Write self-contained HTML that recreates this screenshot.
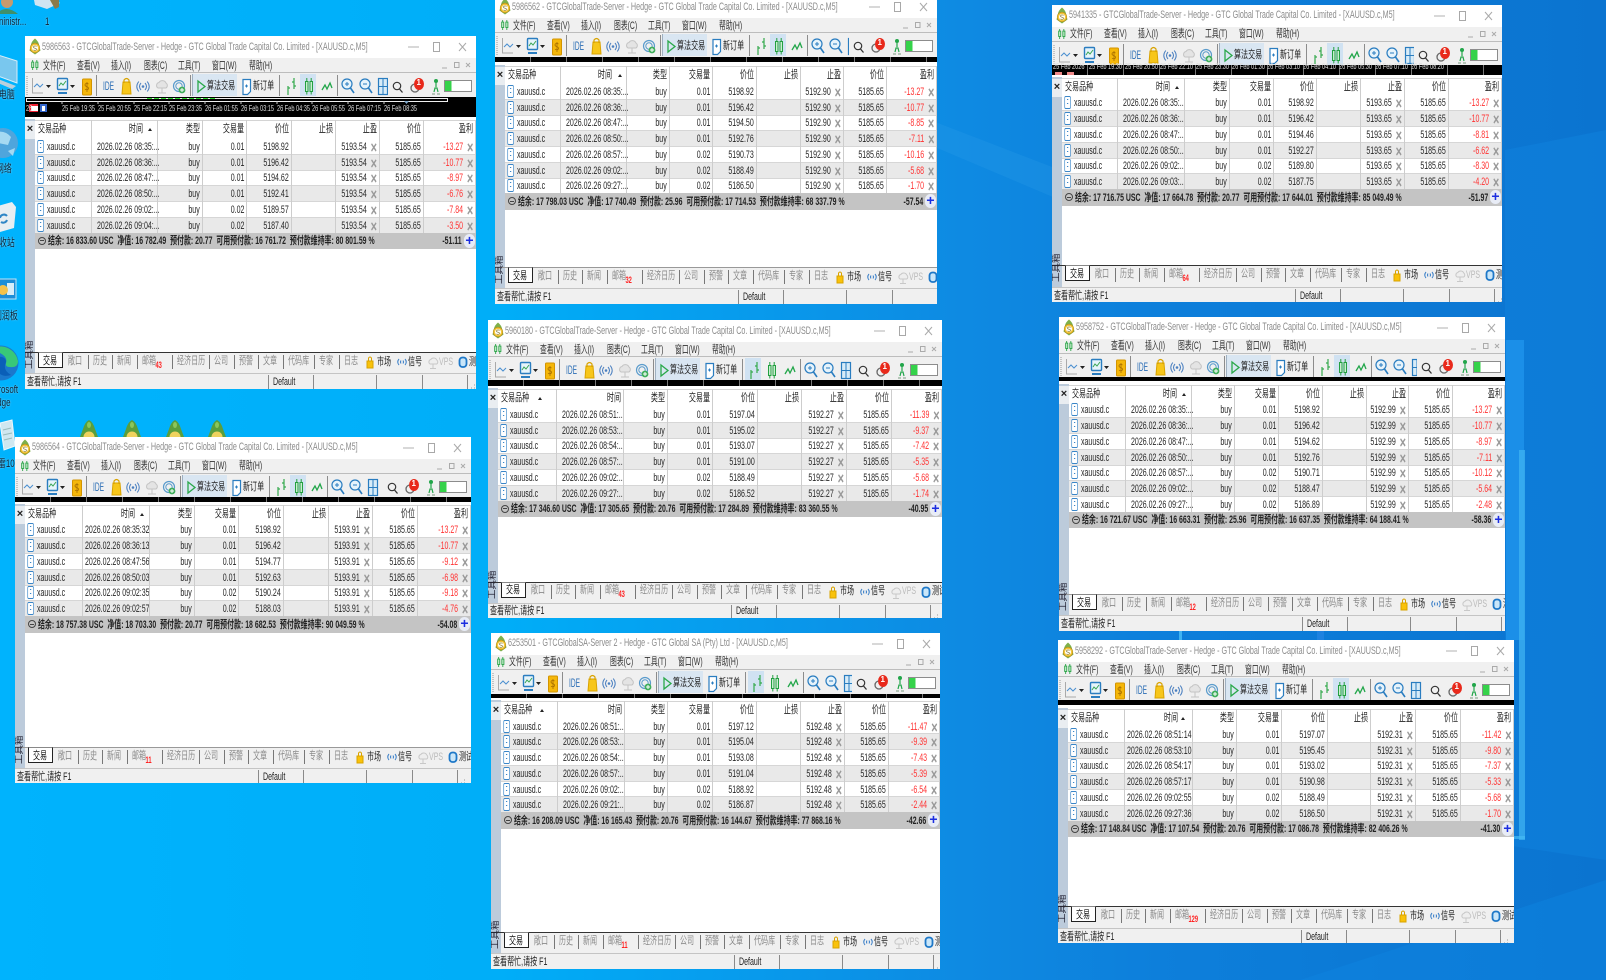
<!DOCTYPE html>
<html lang="zh"><head><meta charset="utf-8"><title>GTC</title>
<style>
html,body{margin:0;width:1606px;height:980px;overflow:hidden}
body{position:relative;font:11px/1.2 "Liberation Sans","Noto Sans CJK SC",sans-serif;background:#0a80dc}
.bg{position:absolute;left:0;top:0}
.lb{position:absolute;white-space:nowrap;color:#0e2236;font-size:11px;text-shadow:0 0 2px rgba(255,255,255,.55);transform:scaleX(.72);transform-origin:0 50%;filter:blur(.3px)}
.w{position:absolute;background:#fff;overflow:hidden;filter:blur(.32px)}
.w i,.w b{font-style:normal;font-weight:normal}
.w i{position:absolute;white-space:nowrap;transform:scaleX(.64);transform-origin:0 50%}
.ti{position:absolute;left:17px;top:4.500px;color:#8c8c8c;font-size:11px;white-space:nowrap;transform:scaleX(.654);transform-origin:0 50%}
.ic{position:absolute;left:4px;top:2px}
.cap{position:absolute;right:0;top:0}
.mb{position:absolute;left:0;right:0;top:22px;height:15px;background:#f0f0f0;border-bottom:1px solid #bdbdbd;box-sizing:border-box;color:#333}
.mb i{top:1.500px;transform:scaleX(.62)}
.mb i:nth-child(1){left:18px}.mb i:nth-child(2){left:52px}.mb i:nth-child(3){left:86px}.mb i:nth-child(4){left:119px}.mb i:nth-child(5){left:153px}.mb i:nth-child(6){left:187px}.mb i:nth-child(7){left:224px}
.mi{position:absolute;left:5px;top:1px}.mr{position:absolute;right:0;top:1px}
.tb{position:absolute;left:0;right:0;top:37px;height:24px;background:#f0f0f0;color:#222}
.tb svg{position:absolute;top:0;left:0}
.tb .tr{left:auto;right:0;background:#f0f0f0}
.btn{position:absolute;left:167px;top:1px;width:45px;height:22px;background:#d9e6f2;border-left:1px solid #9fb0c0;box-sizing:border-box}
.sel{position:absolute;top:1px;width:16px;height:22px;background:#d0e2f2}
.tb i.ide{left:78px;top:6px;color:#2a6db5;font-size:12px;transform:scaleX(.55)}
.tb i.a1{left:182px;top:7px}
.tb i.a2{left:228px;top:7px}
.tb i.n1{left:auto;right:55px;top:5px;color:#fff;font-size:8px;font-weight:bold;transform:none}
.bk{position:absolute;left:0;right:0;background:#000;top:var(--k);height:var(--kh);color:#ddd;font-size:8px}
.bk i{transform:scaleX(.7)}
.bk svg{position:absolute;left:0;top:0}
.ck{background:repeating-linear-gradient(90deg,#000 0 35.600px,#eee 35.600px 36px)}
.gu{position:absolute;left:0;width:10px;background:#bccbdb;top:calc(var(--h) - 1px);height:calc(var(--tt) - var(--h) + 1px)}
.xx{position:absolute;left:0;width:10px;top:calc(var(--h) + 1px);height:18px;background:#e9edf1;color:#222;font-weight:bold;font-size:11px;text-align:center;line-height:17px}
.g{display:grid;grid-template-columns:var(--g);align-items:center;box-sizing:border-box}
.hd{position:absolute;left:10px;right:0;top:var(--h);height:calc(var(--rt) - var(--h));background:#fff;border-top:1px solid #d4d4d4;color:#222}
.g>b{justify-self:end;margin-right:3px;white-space:nowrap;position:relative;transform:scaleX(.64);transform-origin:100% 50%}
.g>b:nth-child(1){justify-self:start;margin-left:3px;margin-right:0;transform-origin:0 50%}
.hd>b:nth-child(2){margin-right:15px}
.hd.s1>b:nth-child(2){margin-right:3px}
.ar{position:absolute;top:7px;width:0;height:0;border:2.500px solid transparent;border-bottom:3px solid #222;border-top:0}
.rows{position:absolute;left:10px;right:0;top:var(--rt)}
.r{height:15.750px;border-bottom:1px solid #d6d6d6;color:#262626;background:#fff}
.r:nth-child(even){background:#e9e9e9}
.r>b{top:1.200px}
.r>b:nth-child(1){margin-left:12px}
.r>b:nth-child(1)::before{content:"";position:absolute;left:-15.500px;top:-1px;width:8px;height:11px;border:1px solid #3a86c8;border-width:1px 1.500px;border-radius:2px;background:linear-gradient(#3a86c8,#3a86c8) 3px 2px/2px 1px no-repeat,linear-gradient(#3a86c8,#3a86c8) 3px 6px/2px 1px no-repeat,#fff}
.r>b:nth-child(2){justify-self:start;margin-left:4.500px;margin-right:0;transform-origin:0 50%}
.fu .r>b:nth-child(2){margin-left:2px}
.r>b:nth-child(7),.r>b:nth-child(9){margin-right:13px}
.r>b:nth-child(9){color:#f33}
.r>b:nth-child(7)::after,.r>b:nth-child(9)::after{content:"×";position:absolute;left:100%;margin-left:6px;top:0;font-size:17px;line-height:13px;font-weight:bold;color:#999}
.sum{position:relative;height:16.500px;margin-top:-1px;background:#c4c4c4;font-weight:bold;color:#222}
.sum b{position:absolute;top:2.500px;font-weight:bold;white-space:nowrap;transform:scaleX(.63);transform-origin:0 50%}
.sum b.m{left:13px}
.sum b.e{right:14px;transform-origin:100% 50%}
.sum u{position:absolute;left:3px;top:4px;width:6px;height:6px;border:1px solid #444;border-radius:50%;background:linear-gradient(#444,#444) center/4px 1px no-repeat}
.sum s{position:absolute;right:1px;top:1px;width:11px;height:14px;background:#e8ecf6;border-radius:6px;text-decoration:none;color:#1c2ee0;font:bold 14px/13px "Liberation Sans",sans-serif;text-align:center}
.cl{position:absolute;left:10px;right:0;top:var(--h);height:calc(var(--rt) - var(--h) + var(--n)*15.750px - 1px)}
.cl div{height:100%;border-right:1px solid #cdcdcd;box-sizing:border-box}
.tabs{position:absolute;left:0;right:0;top:var(--tt);height:calc(var(--st) - var(--tt));background:linear-gradient(90deg,#bccbdb 10px,#f0f0f0 10px);border-top:1px solid var(--tc,#333);box-sizing:border-box;color:#8a8a8a}
.tabs svg{position:absolute;left:0;top:0}
.tabs i{top:1.500px}
.act{position:absolute;left:13px;top:-1px;width:25px;height:16px;background:#fff;border:1px solid #222;border-top:1px solid #888;box-sizing:border-box}
.tabs i:nth-of-type(1){left:18px;color:#111}.tabs i:nth-of-type(2){left:43px}.tabs i:nth-of-type(3){left:68px}.tabs i:nth-of-type(4){left:92px}.tabs i:nth-of-type(5){left:117px}.tabs i:nth-of-type(6){left:152px}.tabs i:nth-of-type(7){left:189px}.tabs i:nth-of-type(8){left:214px}.tabs i:nth-of-type(9){left:238px}.tabs i:nth-of-type(10){left:263px}.tabs i:nth-of-type(11){left:294px}.tabs i:nth-of-type(12){left:319px}.tabs i:nth-of-type(13){left:352px;color:#222;top:2.500px}.tabs i:nth-of-type(14){left:383px;color:#222;top:2.500px}.tabs i:nth-of-type(15){left:414px;color:#bbb;top:2.500px}.tabs i:nth-of-type(16){left:444px;color:#222;top:2.500px}
.tabs em{position:absolute;left:21px;top:5px;font-style:normal;color:#f22;font-size:9px;font-weight:bold}
.vt{position:absolute;left:-1px;top:-13px;width:11px;height:29px;font-size:9.500px;line-height:11px;color:#223;writing-mode:vertical-rl;text-orientation:sideways;transform:rotate(180deg);white-space:nowrap;overflow:hidden}
.st{position:absolute;left:0;right:0;top:var(--st);bottom:0;background:#f0f0f0;border-top:1px solid #c4c4c4;box-sizing:border-box;color:#222}
.st i{top:1.500px}.st i:nth-of-type(1){left:2px}.st i:nth-of-type(2){left:248px}
.st svg{position:absolute;left:0;top:0}
</style></head><body>

<svg class="bg" width="1606" height="980" viewBox="0 0 1606 980">
<defs>
<linearGradient id="bgl" x1="0" x2="1" y1="0" y2="0"><stop offset="0" stop-color="#00b3fd"/><stop offset=".31" stop-color="#00aef8"/><stop offset=".6" stop-color="#0e8ae2"/><stop offset=".72" stop-color="#0d7fdb"/><stop offset="1" stop-color="#0b74d0"/></linearGradient>
<symbol id="tb" viewBox="0 0 364 24">
<path d="M2 3v19" stroke="#999" stroke-dasharray="1 1" fill="none"/>
<path d="M7.500 5v15H18" stroke="#aaa" fill="none"/><path d="M9 14l3-3 3 3 3-3" stroke="#4a8fd0" fill="none"/>
<path d="M21 12h5l-2.500 3zM45 12h5l-2.500 3z" fill="#222"/>
<rect x="32.500" y="5.500" width="10" height="11" rx="1" fill="#e6f4fb" stroke="#2a7dc0" stroke-width="1.400"/><path d="M34 13l2-3 2 2 3-4" stroke="#3aa655" fill="none"/><path d="M33 19h9v2h-9z" fill="#2a7dc0"/>
<rect x="57.500" y="6" width="9" height="16" rx="1" fill="#f5b70a" stroke="#d39400"/><path d="M63.500 11c-1.500-1-3.500-.7-3.500 1 0 2 3.500 1.200 3.500 3.200 0 1.600-2 2-3.500 1M62 9v10" stroke="#a86f00" fill="none" stroke-width=".8"/>
<path d="M71.500 2v21M165.500 2v21M254.500 2v21M312.500 2v21" stroke="#8c8c8c"/>
<path d="M97 21l1-12h7l1 12z" fill="#f7c61a" stroke="#d9a300"/><path d="M99 10V7q2.500-3 5 0v3" fill="none" stroke="#d9a300" stroke-width="1.200"/>
<path d="M116 10q-3 3.500 0 7M120 10q3 3.500 0 7M113.800 8.500q-4 5 0 10M122.200 8.500q4 5 0 10" stroke="#4a7fc0" fill="none"/><circle cx="118" cy="13.500" r="1.300" fill="#4a7fc0"/>
<path d="M133 15a3 3 0 0 1 1-5.500 4 4 0 0 1 7 .5 3 3 0 0 1 0 5zM137 15v5M133 20h8" fill="#e4e4e4" stroke="#c4c4c4"/>
<circle cx="154" cy="13" r="5.500" fill="none" stroke="#5a9bcc" stroke-width="1.200"/><circle cx="154" cy="13" r="3.200" fill="none" stroke="#5a9bcc"/><circle cx="157" cy="17" r="3.400" fill="#3fae5a"/><path d="M157 15v4M155 17h4" stroke="#fff"/>
<path d="M173 8l7 5.500-7 5.500z" fill="none" stroke="#2aa84a" stroke-width="1.300"/>
<path d="M218 6.500h7.500v12l-3 3h-4.500z" fill="#fff" stroke="#2a7dc0" stroke-width="1.200"/><path d="M220 13h3M221.500 11.500v3" stroke="#2a7dc0"/>
<path d="M263 13v9M263 15h2M269 5v11M267 9h2M269 13h2" stroke="#35a94d" stroke-width="1.200" fill="none"/>
<rect x="280.500" y="8.500" width="2.500" height="10" fill="#c9eed0" stroke="#22a040"/><rect x="285" y="8.500" width="2.500" height="10" fill="#c9eed0" stroke="#22a040"/><path d="M281.800 5v3.500M281.800 18.500v3M286.200 5v3.500M286.200 18.500v3" stroke="#22a040"/>
<path d="M297 17l3-5 2 4 3-6 2 5" fill="none" stroke="#22a64a" stroke-width="1.300"/>
<circle cx="322" cy="11" r="5" fill="#e6f3fb" stroke="#2a7dc0" stroke-width="1.200"/><path d="M320 11h4M322 9v4" stroke="#2a7dc0"/><path d="M325.500 15l3.500 5" stroke="#2a7dc0" stroke-width="1.600"/>
<circle cx="340" cy="11" r="5" fill="#e6f3fb" stroke="#2a7dc0" stroke-width="1.200"/><path d="M338 11h4" stroke="#2a7dc0"/><path d="M343.500 15l3.500 5" stroke="#2a7dc0" stroke-width="1.600"/>
<rect x="353.500" y="5.500" width="9" height="16" fill="#d8ecf8" stroke="#2a7dc0" stroke-width="1.200"/><path d="M358 5.500v16M353.500 13.500h9" stroke="#2a7dc0"/>
</symbol>
<symbol id="tr" viewBox="0 0 88 24">
<circle cx="9" cy="13" r="3.700" fill="none" stroke="#333" stroke-width="1.200"/><path d="M11.500 16l3 3.500" stroke="#333" stroke-width="1.300"/>
<circle cx="27" cy="15" r="4" fill="none" stroke="#666" stroke-width="1.300"/><ellipse cx="31" cy="11" rx="5" ry="6" fill="#e8291b"/>
<circle cx="48" cy="8" r="2" fill="#22a64a"/><path d="M48 10v4M46 19l1-4h2l1 4" stroke="#22a64a" fill="none" stroke-width="1.200"/><path d="M44 21h3M49 21h3" stroke="#7a9a80"/>
<rect x="56.500" y="7.500" width="27" height="11" fill="#fff" stroke="#8c8c8c"/><rect x="57" y="8" width="6.500" height="10" fill="#35d24a"/>
</symbol>
<symbol id="ts" viewBox="0 0 456 18">
<path d="M63.500 2v14M87.500 2v14M112.500 2v14M147.500 2v14M184.500 2v14M209.500 2v14M233.500 2v14M258.500 2v14M289.500 2v14M314.500 2v14" stroke="#777"/>
<path d="M342 15V8h6v7z" fill="#f9c20a" stroke="#d9a300"/><path d="M343.500 8V5q1.500-2 3 0v3" fill="none" stroke="#d9a300"/>
<path d="M374 6q-2.500 3 0 6M380 6q2.500 3 0 6M376 7.500q-1 1.500 0 3M378 7.500q1 1.500 0 3" stroke="#3a7fc8" fill="none"/>
<path d="M405 11a2.500 2.500 0 0 1 .8-4.500 3.500 3.500 0 0 1 6 .5 2.500 2.500 0 0 1 0 4zM408 11v4M405 15.500h6" fill="#eee" stroke="#c8c8c8"/>
<rect x="434.500" y="4.500" width="7" height="9.500" rx="3" fill="#c9e6f9" stroke="#1e78c8" stroke-width="1.800"/>
</symbol>
<symbol id="ss" viewBox="0 0 456 18">
<path d="M243.500 1v15M288.500 1v15M351.500 1v15M397.500 1v15M442.500 1v15" stroke="#8a8a8a"/>
<path d="M449 14h1M446 14h1M449 11h1" stroke="#999"/>
</symbol>
<symbol id="mi" viewBox="0 0 12 12"><rect x="2" y="2.500" width="2.500" height="6.500" fill="#c9eed0" stroke="#22a040"/><rect x="7" y="2.500" width="2.500" height="6.500" fill="#c9eed0" stroke="#22a040"/><path d="M3.200 0v2.500M3.200 9v3M8.200 0v2.500M8.200 9v3" stroke="#22a040"/></symbol>
<symbol id="ic" viewBox="0 0 12 17"><path d="M6 0.500q3.500 3 4 6l1.500 6-5.500 4-5.500-4 1.500-6q.5-3 4-6z" fill="#7eb04a"/><circle cx="6" cy="10" r="4.800" fill="#f4c637" stroke="#b08a18" stroke-width=".6"/><circle cx="6" cy="10" r="3" fill="#fff"/><path d="M7.500 8.500c-1-1-3-.5-3 .7s3 .8 3 2c0 1.200-2 1.500-3 .7" fill="none" stroke="#8a7a2a" stroke-width=".7"/></symbol>
<symbol id="cp" viewBox="0 0 80 22"><path d="M12 11h11" stroke="#b0b0b0"/><rect x="37.500" y="6.500" width="6" height="9" fill="none" stroke="#a8a8a8"/><path d="M63 7l7 8M70 7l-7 8" stroke="#aaa"/></symbol>
<symbol id="mr" viewBox="0 0 40 12"><path d="M6 9h5" stroke="#aaa"/><rect x="18.500" y="3.500" width="4.500" height="5" fill="none" stroke="#aaa"/><path d="M30 4l4 4M34 4l-4 4" stroke="#aaa"/></symbol>
</defs>
<rect width="1606" height="980" fill="url(#bgl)"/>
<polygon points="930,120 1060,170 1060,200 930,145" fill="#2a9ae8" opacity=".3"/>
<polygon points="1300,980 1606,880 1606,980" fill="#0d84e0" opacity=".5"/>
<polygon points="1505,150 1606,130 1606,860 1505,845" fill="#1182dd" opacity=".55"/>
<rect x="1506" y="340" width="18" height="300" fill="#1b8fe8"/>
<rect x="1519" y="450" width="6" height="390" fill="#3fb3f2" opacity=".75"/>
<rect x="1506" y="836" width="19" height="3" fill="#45baf5" opacity=".7"/>
<rect x="1179" y="631" width="3" height="10" fill="#3fb3f2"/><rect x="1317" y="631" width="7" height="10" fill="#1e82e0"/>
<!-- desktop icons -->
<circle cx="7" cy="2" r="6" fill="#c79a6e"/><path d="M-4 14q10-10 22 0z" fill="#3f8f6a"/>
<path d="M34 0h22l4 3-13 6-12-4z" fill="#cfe4f2"/><path d="M50 0h9v7l-4 2z" fill="#8b7a4a"/>
<path d="M-2 55l19 6v22l-19-7z" fill="#79c7ee" stroke="#d8eef9"/><path d="M-2 79l18 7-4 3-14-6z" fill="#b9cfdc"/>
<circle cx="3" cy="143" r="15" fill="#4fa5dc"/><path d="M-6 133q10-4 17 4l-3 8-10-2zM8 151l7-3-2 8z" fill="#a5d9f2"/>
<path d="M-2 206l14-4 4 5-2 21-14 4z" fill="#e8eef2"/><path d="M0 218a4 4 0 0 1 7-2M7 220a4 4 0 0 1-6 2" stroke="#2f86c6" stroke-width="2" fill="none"/>
<rect x="-2" y="279" width="18" height="20" fill="#1c8ed8" stroke="#bfe3f5"/><rect x="7" y="283" width="7" height="12" fill="#d7edf8"/><circle cx="3" cy="290" r="5" fill="#f5c24a"/>
<circle cx="1" cy="363" r="17.500" fill="#1b78cc"/><path d="M-16 359a17.500 17.500 0 0 1 34 2q0 7-8 6-5 0-4-4 2-6-6-10-8-3-16 6z" fill="#38c878"/><path d="M-5 360q1-4 7-3 6 2 3 8-1 6 6 10-9 3-14-4-3-5-2-11z" fill="#0a5fb8"/>
<path d="M0 423l12 -3 3 26-11 4z" fill="#cfe7f0" stroke="#eef7fb"/><path d="M3 430l8-2M3 435l9-2M4 440l8-2" stroke="#9bb"/>
<g id="t1"><path d="M89 420q4 2 6 9l3 8H80l3-8q2-7 6-9z" fill="#5a9e3c"/><ellipse cx="89" cy="425" rx="2" ry="3" fill="#8cc65a"/><circle cx="89" cy="437" r="5.500" fill="#efd25e"/></g>
<use href="#t1" x="43"/><use href="#t1" x="86"/><use href="#t1" x="128"/>
</svg>
<div class="lb" style="left:-1px;top:16px">ninistr...</div>
<div class="lb" style="left:45px;top:16px">1</div>
<div class="lb" style="left:-9px;top:88.500px">此电脑</div>
<div class="lb" style="left:-4px;top:162.500px">网络</div>
<div class="lb" style="left:-9px;top:236.500px">回收站</div>
<div class="lb" style="left:-6px;top:309.500px">利润板</div>
<div class="lb" style="left:-14px;top:383.500px">Microsoft</div>
<div class="lb" style="left:-8px;top:396.500px">Edge</div>
<div class="lb" style="left:-10px;top:457.500px">迅雷10.</div>

<!-- W1 -->
<div class="w" style="left:25px;top:36px;width:451px;height:353px;--g:57px 66px 45px 44px 45px 44px 44px 44px 52px;--k:61px;--kh:20px;--h:84px;--rt:103px;--n:6;--tt:316px;--st:337px">
<svg class="ic" width="12" height="17"><use href="#ic"/></svg><div class="ti">5986563 - GTCGlobalTrade-Server - Hedge - GTC Global Trade Capital Co. Limited - [XAUUSD.c,M5]</div><svg class="cap" width="80" height="22"><use href="#cp"/></svg>
<div class="mb"><i>文件(F)</i><i>查看(V)</i><i>插入(I)</i><i>图表(C)</i><i>工具(T)</i><i>窗口(W)</i><i>帮助(H)</i><svg class="mi" width="10" height="12"><use href="#mi"/></svg><svg class="mr" width="40" height="12"><use href="#mr"/></svg></div>
<div class="tb"><div class="btn"></div><div class="sel" style="left:275px"></div><svg width="364" height="24"><use href="#tb"/></svg><svg class="tr" width="88" height="24"><use href="#tr"/></svg><i class="ide">IDE</i><i class="a1">算法交易</i><i class="a2">新订单</i><i class="n1">1</i></div>
<div class="bk"><svg width="451" height="20"><rect x="1.500" y="1.500" width="421" height="3" fill="none" stroke="#eee"/><path d="M122 1.500h70" stroke="#2ed52e" stroke-dasharray="5 2"/><path d="M37 4v3M73 4v3M109 4v3M144 4v3M180 4v3M216 4v3M252 4v3M287 4v3M323 4v3M359 4v3" stroke="#ccc"/><path d="M379 4h5l-2.500 3z" fill="#7ea6c8"/><rect x="4" y="7" width="9" height="8" fill="#e23"/><rect x="6" y="9" width="7" height="5" fill="#fff"/><rect x="15" y="7" width="7" height="8" fill="#36c"/><rect x="17" y="9" width="3" height="5" fill="#fff"/></svg><i style="left:1px;top:7px">26</i><i style="left:37px;top:7px">25 Feb 19:35</i><i style="left:73px;top:7px">25 Feb 20:55</i><i style="left:109px;top:7px">25 Feb 22:15</i><i style="left:144px;top:7px">25 Feb 23:35</i><i style="left:180px;top:7px">26 Feb 01:55</i><i style="left:216px;top:7px">26 Feb 03:15</i><i style="left:252px;top:7px">26 Feb 04:35</i><i style="left:287px;top:7px">26 Feb 05:55</i><i style="left:323px;top:7px">26 Feb 07:15</i><i style="left:359px;top:7px">26 Feb 08:35</i></div>
<div class="gu"></div><div class="xx">×</div>
<div class="hd g"><b>交易品种</b><b>时间</b><b>类型</b><b>交易量</b><b>价位</b><b>止损</b><b>止盈</b><b>价位</b><b>盈利</b><u class="ar" style="left:113px"></u></div>
<div class="rows">
<div class="r g"><b>xauusd.c</b><b>2026.02.26 08:35:...</b><b>buy</b><b>0.01</b><b>5198.92</b><b></b><b>5193.54</b><b>5185.65</b><b>-13.27</b></div>
<div class="r g"><b>xauusd.c</b><b>2026.02.26 08:36:...</b><b>buy</b><b>0.01</b><b>5196.42</b><b></b><b>5193.54</b><b>5185.65</b><b>-10.77</b></div>
<div class="r g"><b>xauusd.c</b><b>2026.02.26 08:47:...</b><b>buy</b><b>0.01</b><b>5194.62</b><b></b><b>5193.54</b><b>5185.65</b><b>-8.97</b></div>
<div class="r g"><b>xauusd.c</b><b>2026.02.26 08:50:...</b><b>buy</b><b>0.01</b><b>5192.41</b><b></b><b>5193.54</b><b>5185.65</b><b>-6.76</b></div>
<div class="r g"><b>xauusd.c</b><b>2026.02.26 09:02:...</b><b>buy</b><b>0.02</b><b>5189.57</b><b></b><b>5193.54</b><b>5185.65</b><b>-7.84</b></div>
<div class="r g"><b>xauusd.c</b><b>2026.02.26 09:04:...</b><b>buy</b><b>0.02</b><b>5187.40</b><b></b><b>5193.54</b><b>5185.65</b><b>-3.50</b></div>
<div class="sum"><u></u><b class="m">结余: 16 833.60 USC&nbsp; 净值: 16 782.49&nbsp; 预付款: 20.77&nbsp; 可用预付款: 16 761.72&nbsp; 预付款维持率: 80 801.59 %</b><b class="e">-51.11</b><s>+</s></div></div>
<div class="cl g"><div></div><div></div><div></div><div></div><div></div><div></div><div></div><div></div><div></div></div>
<div class="tabs"><div class="act"></div><svg width="456" height="18"><use href="#ts"/></svg><div class="vt">工具箱</div><i>交易</i><i>敞口</i><i>历史</i><i>新闻</i><i>邮箱<em>43</em></i><i>经济日历</i><i>公司</i><i>预警</i><i>文章</i><i>代码库</i><i>专家</i><i>日志</i><i>市场</i><i>信号</i><i>VPS</i><i>测试器</i></div>
<div class="st"><svg width="456" height="18"><use href="#ss"/></svg><i>查看帮忙,请按 F1</i><i>Default</i></div>
</div>

<!-- W2 -->
<div class="w" style="left:495px;top:-4px;width:442px;height:307.500px;--tc:#999;--g:56px 66px 43px 43px 44px 44px 43px 43px 50px;--k:61px;--kh:5px;--h:70px;--rt:88px;--n:7;--tt:271px;--st:292px">
<svg class="ic" width="12" height="17"><use href="#ic"/></svg><div class="ti">5986562 - GTCGlobalTrade-Server - Hedge - GTC Global Trade Capital Co. Limited - [XAUUSD.c,M5]</div><svg class="cap" width="80" height="22"><use href="#cp"/></svg>
<div class="mb"><i>文件(F)</i><i>查看(V)</i><i>插入(I)</i><i>图表(C)</i><i>工具(T)</i><i>窗口(W)</i><i>帮助(H)</i><svg class="mi" width="10" height="12"><use href="#mi"/></svg><svg class="mr" width="40" height="12"><use href="#mr"/></svg></div>
<div class="tb"><div class="btn"></div><div class="sel" style="left:275px"></div><svg width="364" height="24"><use href="#tb"/></svg><svg class="tr" width="88" height="24"><use href="#tr"/></svg><i class="ide">IDE</i><i class="a1">算法交易</i><i class="a2">新订单</i><i class="n1">1</i></div>
<div class="bk ck"></div>
<div class="gu"></div><div class="xx">×</div>
<div class="hd g"><b>交易品种</b><b>时间</b><b>类型</b><b>交易量</b><b>价位</b><b>止损</b><b>止盈</b><b>价位</b><b>盈利</b><u class="ar" style="left:113px"></u></div>
<div class="rows">
<div class="r g"><b>xauusd.c</b><b>2026.02.26 08:35:...</b><b>buy</b><b>0.01</b><b>5198.92</b><b></b><b>5192.90</b><b>5185.65</b><b>-13.27</b></div>
<div class="r g"><b>xauusd.c</b><b>2026.02.26 08:36:...</b><b>buy</b><b>0.01</b><b>5196.42</b><b></b><b>5192.90</b><b>5185.65</b><b>-10.77</b></div>
<div class="r g"><b>xauusd.c</b><b>2026.02.26 08:47:...</b><b>buy</b><b>0.01</b><b>5194.50</b><b></b><b>5192.90</b><b>5185.65</b><b>-8.85</b></div>
<div class="r g"><b>xauusd.c</b><b>2026.02.26 08:50:...</b><b>buy</b><b>0.01</b><b>5192.76</b><b></b><b>5192.90</b><b>5185.65</b><b>-7.11</b></div>
<div class="r g"><b>xauusd.c</b><b>2026.02.26 08:57:...</b><b>buy</b><b>0.02</b><b>5190.73</b><b></b><b>5192.90</b><b>5185.65</b><b>-10.16</b></div>
<div class="r g"><b>xauusd.c</b><b>2026.02.26 09:02:...</b><b>buy</b><b>0.02</b><b>5188.49</b><b></b><b>5192.90</b><b>5185.65</b><b>-5.68</b></div>
<div class="r g"><b>xauusd.c</b><b>2026.02.26 09:27:...</b><b>buy</b><b>0.02</b><b>5186.50</b><b></b><b>5192.90</b><b>5185.65</b><b>-1.70</b></div>
<div class="sum"><u></u><b class="m">结余: 17 798.03 USC&nbsp; 净值: 17 740.49&nbsp; 预付款: 25.96&nbsp; 可用预付款: 17 714.53&nbsp; 预付款维持率: 68 337.79 %</b><b class="e">-57.54</b><s>+</s></div></div>
<div class="cl g"><div></div><div></div><div></div><div></div><div></div><div></div><div></div><div></div><div></div></div>
<div class="tabs"><div class="act"></div><svg width="456" height="18"><use href="#ts"/></svg><div class="vt">工具箱</div><i>交易</i><i>敞口</i><i>历史</i><i>新闻</i><i>邮箱<em>32</em></i><i>经济日历</i><i>公司</i><i>预警</i><i>文章</i><i>代码库</i><i>专家</i><i>日志</i><i>市场</i><i>信号</i><i>VPS</i><i>测试器</i></div>
<div class="st"><svg width="456" height="18"><use href="#ss"/></svg><i>查看帮忙,请按 F1</i><i>Default</i></div>
</div>

<!-- W3 -->
<div class="w" style="left:1052px;top:4.500px;width:450px;height:297.500px;--g:56px 67px 45px 44px 43px 44px 44px 44px 53px;--k:60.500px;--kh:9.500px;--h:73.500px;--rt:91px;--n:6;--tt:260.500px;--st:282.500px">
<svg class="ic" width="12" height="17"><use href="#ic"/></svg><div class="ti">5941335 - GTCGlobalTrade-Server - Hedge - GTC Global Trade Capital Co. Limited - [XAUUSD.c,M5]</div><svg class="cap" width="80" height="22"><use href="#cp"/></svg>
<div class="mb"><i>文件(F)</i><i>查看(V)</i><i>插入(I)</i><i>图表(C)</i><i>工具(T)</i><i>窗口(W)</i><i>帮助(H)</i><svg class="mi" width="10" height="12"><use href="#mi"/></svg><svg class="mr" width="40" height="12"><use href="#mr"/></svg></div>
<div class="tb"><div class="btn"></div><div class="sel" style="left:275px"></div><svg width="364" height="24"><use href="#tb"/></svg><svg class="tr" width="88" height="24"><use href="#tr"/></svg><i class="ide">IDE</i><i class="a1">算法交易</i><i class="a2">新订单</i><i class="n1">1</i></div>
<div class="bk ck"><svg width="60" height="10"><rect x="3" y="7" width="7" height="3" fill="#e88"/><rect x="15" y="7" width="7" height="3" fill="#e88"/></svg><i style="left:1px;top:-3px">25 Feb 2026</i><i style="left:37px;top:-3px">25 Feb 19:30</i><i style="left:73px;top:-3px">25 Feb 20:50</i><i style="left:108px;top:-3px">25 Feb 22:10</i><i style="left:144px;top:-3px">25 Feb 23:30</i><i style="left:180px;top:-3px">26 Feb 01:30</i><i style="left:215px;top:-3px">26 Feb 03:10</i><i style="left:251px;top:-3px">26 Feb 04:10</i><i style="left:287px;top:-3px">26 Feb 05:30</i><i style="left:323px;top:-3px">26 Feb 07:10</i><i style="left:359px;top:-3px">26 Feb 08:20</i></div>
<div class="gu"></div><div class="xx">×</div>
<div class="hd g"><b>交易品种</b><b>时间</b><b>类型</b><b>交易量</b><b>价位</b><b>止损</b><b>止盈</b><b>价位</b><b>盈利</b><u class="ar" style="left:113px"></u></div>
<div class="rows">
<div class="r g"><b>xauusd.c</b><b>2026.02.26 08:35:...</b><b>buy</b><b>0.01</b><b>5198.92</b><b></b><b>5193.65</b><b>5185.65</b><b>-13.27</b></div>
<div class="r g"><b>xauusd.c</b><b>2026.02.26 08:36:...</b><b>buy</b><b>0.01</b><b>5196.42</b><b></b><b>5193.65</b><b>5185.65</b><b>-10.77</b></div>
<div class="r g"><b>xauusd.c</b><b>2026.02.26 08:47:...</b><b>buy</b><b>0.01</b><b>5194.46</b><b></b><b>5193.65</b><b>5185.65</b><b>-8.81</b></div>
<div class="r g"><b>xauusd.c</b><b>2026.02.26 08:50:...</b><b>buy</b><b>0.01</b><b>5192.27</b><b></b><b>5193.65</b><b>5185.65</b><b>-6.62</b></div>
<div class="r g"><b>xauusd.c</b><b>2026.02.26 09:02:...</b><b>buy</b><b>0.02</b><b>5189.80</b><b></b><b>5193.65</b><b>5185.65</b><b>-8.30</b></div>
<div class="r g"><b>xauusd.c</b><b>2026.02.26 09:03:...</b><b>buy</b><b>0.02</b><b>5187.75</b><b></b><b>5193.65</b><b>5185.65</b><b>-4.20</b></div>
<div class="sum"><u></u><b class="m">结余: 17 716.75 USC&nbsp; 净值: 17 664.78&nbsp; 预付款: 20.77&nbsp; 可用预付款: 17 644.01&nbsp; 预付款维持率: 85 049.49 %</b><b class="e">-51.97</b><s>+</s></div></div>
<div class="cl g"><div></div><div></div><div></div><div></div><div></div><div></div><div></div><div></div><div></div></div>
<div class="tabs"><div class="act"></div><svg width="456" height="18"><use href="#ts"/></svg><div class="vt">工具箱</div><i>交易</i><i>敞口</i><i>历史</i><i>新闻</i><i>邮箱<em>64</em></i><i>经济日历</i><i>公司</i><i>预警</i><i>文章</i><i>代码库</i><i>专家</i><i>日志</i><i>市场</i><i>信号</i><i>VPS</i><i>测试器</i></div>
<div class="st"><svg width="456" height="18"><use href="#ss"/></svg><i>查看帮忙,请按 F1</i><i>Default</i></div>
</div>

<!-- W4 -->
<div class="w" style="left:15px;top:436.500px;width:456px;height:346.500px;--tc:#999;--g:58px 67px 45px 44px 45px 45px 44px 45px 53px;--k:60px;--kh:5px;--h:68.500px;--rt:86px;--n:6;--tt:310.500px;--st:331.500px">
<svg class="ic" width="12" height="17"><use href="#ic"/></svg><div class="ti">5986564 - GTCGlobalTrade-Server - Hedge - GTC Global Trade Capital Co. Limited - [XAUUSD.c,M5]</div><svg class="cap" width="80" height="22"><use href="#cp"/></svg>
<div class="mb"><i>文件(F)</i><i>查看(V)</i><i>插入(I)</i><i>图表(C)</i><i>工具(T)</i><i>窗口(W)</i><i>帮助(H)</i><svg class="mi" width="10" height="12"><use href="#mi"/></svg><svg class="mr" width="40" height="12"><use href="#mr"/></svg></div>
<div class="tb"><div class="btn"></div><div class="sel" style="left:275px"></div><svg width="364" height="24"><use href="#tb"/></svg><svg class="tr" width="88" height="24"><use href="#tr"/></svg><i class="ide">IDE</i><i class="a1">算法交易</i><i class="a2">新订单</i><i class="n1">1</i></div>
<div class="bk ck"></div>
<div class="gu"></div><div class="xx">×</div>
<div class="hd g"><b>交易品种</b><b>时间</b><b>类型</b><b>交易量</b><b>价位</b><b>止损</b><b>止盈</b><b>价位</b><b>盈利</b><u class="ar" style="left:115px"></u></div>
<div class="rows fu">
<div class="r g"><b>xauusd.c</b><b>2026.02.26 08:35:32</b><b>buy</b><b>0.01</b><b>5198.92</b><b></b><b>5193.91</b><b>5185.65</b><b>-13.27</b></div>
<div class="r g"><b>xauusd.c</b><b>2026.02.26 08:36:13</b><b>buy</b><b>0.01</b><b>5196.42</b><b></b><b>5193.91</b><b>5185.65</b><b>-10.77</b></div>
<div class="r g"><b>xauusd.c</b><b>2026.02.26 08:47:56</b><b>buy</b><b>0.01</b><b>5194.77</b><b></b><b>5193.91</b><b>5185.65</b><b>-9.12</b></div>
<div class="r g"><b>xauusd.c</b><b>2026.02.26 08:50:03</b><b>buy</b><b>0.01</b><b>5192.63</b><b></b><b>5193.91</b><b>5185.65</b><b>-6.98</b></div>
<div class="r g"><b>xauusd.c</b><b>2026.02.26 09:02:35</b><b>buy</b><b>0.02</b><b>5190.24</b><b></b><b>5193.91</b><b>5185.65</b><b>-9.18</b></div>
<div class="r g"><b>xauusd.c</b><b>2026.02.26 09:02:57</b><b>buy</b><b>0.02</b><b>5188.03</b><b></b><b>5193.91</b><b>5185.65</b><b>-4.76</b></div>
<div class="sum"><u></u><b class="m">结余: 18 757.38 USC&nbsp; 净值: 18 703.30&nbsp; 预付款: 20.77&nbsp; 可用预付款: 18 682.53&nbsp; 预付款维持率: 90 049.59 %</b><b class="e">-54.08</b><s>+</s></div></div>
<div class="cl g"><div></div><div></div><div></div><div></div><div></div><div></div><div></div><div></div><div></div></div>
<div class="tabs"><div class="act"></div><svg width="456" height="18"><use href="#ts"/></svg><div class="vt">工具箱</div><i>交易</i><i>敞口</i><i>历史</i><i>新闻</i><i>邮箱<em>11</em></i><i>经济日历</i><i>公司</i><i>预警</i><i>文章</i><i>代码库</i><i>专家</i><i>日志</i><i>市场</i><i>信号</i><i>VPS</i><i>测试器</i></div>
<div class="st"><svg width="456" height="18"><use href="#ss"/></svg><i>查看帮忙,请按 F1</i><i>Default</i></div>
</div>

<!-- W5 -->
<div class="w" style="left:488px;top:320px;width:454px;height:298px;--g:59px 67px 44px 45px 45px 44px 45px 45px 50px;--k:60px;--kh:6px;--h:69px;--rt:87px;--n:6;--tt:261.500px;--st:282.500px">
<svg class="ic" width="12" height="17"><use href="#ic"/></svg><div class="ti">5960180 - GTCGlobalTrade-Server - Hedge - GTC Global Trade Capital Co. Limited - [XAUUSD.c,M5]</div><svg class="cap" width="80" height="22"><use href="#cp"/></svg>
<div class="mb"><i>文件(F)</i><i>查看(V)</i><i>插入(I)</i><i>图表(C)</i><i>工具(T)</i><i>窗口(W)</i><i>帮助(H)</i><svg class="mi" width="10" height="12"><use href="#mi"/></svg><svg class="mr" width="40" height="12"><use href="#mr"/></svg></div>
<div class="tb"><div class="btn"></div><div class="sel" style="left:257px"></div><svg width="364" height="24"><use href="#tb"/></svg><svg class="tr" width="88" height="24"><use href="#tr"/></svg><i class="ide">IDE</i><i class="a1">算法交易</i><i class="a2">新订单</i><i class="n1">1</i></div>
<div class="bk ck"></div>
<div class="gu"></div><div class="xx">×</div>
<div class="hd g s1"><b>交易品种</b><b>时间</b><b>类型</b><b>交易量</b><b>价位</b><b>止损</b><b>止盈</b><b>价位</b><b>盈利</b><u class="ar" style="left:40px"></u></div>
<div class="rows">
<div class="r g"><b>xauusd.c</b><b>2026.02.26 08:51:...</b><b>buy</b><b>0.01</b><b>5197.04</b><b></b><b>5192.27</b><b>5185.65</b><b>-11.39</b></div>
<div class="r g"><b>xauusd.c</b><b>2026.02.26 08:53:...</b><b>buy</b><b>0.01</b><b>5195.02</b><b></b><b>5192.27</b><b>5185.65</b><b>-9.37</b></div>
<div class="r g"><b>xauusd.c</b><b>2026.02.26 08:54:...</b><b>buy</b><b>0.01</b><b>5193.07</b><b></b><b>5192.27</b><b>5185.65</b><b>-7.42</b></div>
<div class="r g"><b>xauusd.c</b><b>2026.02.26 08:57:...</b><b>buy</b><b>0.01</b><b>5191.00</b><b></b><b>5192.27</b><b>5185.65</b><b>-5.35</b></div>
<div class="r g"><b>xauusd.c</b><b>2026.02.26 09:02:...</b><b>buy</b><b>0.02</b><b>5188.49</b><b></b><b>5192.27</b><b>5185.65</b><b>-5.68</b></div>
<div class="r g"><b>xauusd.c</b><b>2026.02.26 09:27:...</b><b>buy</b><b>0.02</b><b>5186.52</b><b></b><b>5192.27</b><b>5185.65</b><b>-1.74</b></div>
<div class="sum"><u></u><b class="m">结余: 17 346.60 USC&nbsp; 净值: 17 305.65&nbsp; 预付款: 20.76&nbsp; 可用预付款: 17 284.89&nbsp; 预付款维持率: 83 360.55 %</b><b class="e">-40.95</b><s>+</s></div></div>
<div class="cl g"><div></div><div></div><div></div><div></div><div></div><div></div><div></div><div></div><div></div></div>
<div class="tabs"><div class="act"></div><svg width="456" height="18"><use href="#ts"/></svg><div class="vt">工具箱</div><i>交易</i><i>敞口</i><i>历史</i><i>新闻</i><i>邮箱<em>43</em></i><i>经济日历</i><i>公司</i><i>预警</i><i>文章</i><i>代码库</i><i>专家</i><i>日志</i><i>市场</i><i>信号</i><i>VPS</i><i>测试器</i></div>
<div class="st"><svg width="456" height="18"><use href="#ss"/></svg><i>查看帮忙,请按 F1</i><i>Default</i></div>
</div>

<!-- W6 -->
<div class="w" style="left:1059px;top:316.500px;width:446px;height:314.500px;--tc:#999;--g:57px 66px 43px 44px 44px 44px 42px 44px 52px;--k:60px;--kh:4.500px;--h:68.500px;--rt:86px;--n:7;--tt:277.500px;--st:298.500px">
<svg class="ic" width="12" height="17"><use href="#ic"/></svg><div class="ti">5958752 - GTCGlobalTrade-Server - Hedge - GTC Global Trade Capital Co. Limited - [XAUUSD.c,M5]</div><svg class="cap" width="80" height="22"><use href="#cp"/></svg>
<div class="mb"><i>文件(F)</i><i>查看(V)</i><i>插入(I)</i><i>图表(C)</i><i>工具(T)</i><i>窗口(W)</i><i>帮助(H)</i><svg class="mi" width="10" height="12"><use href="#mi"/></svg><svg class="mr" width="40" height="12"><use href="#mr"/></svg></div>
<div class="tb"><div class="btn"></div><div class="sel" style="left:275px"></div><svg width="364" height="24"><use href="#tb"/></svg><svg class="tr" width="88" height="24"><use href="#tr"/></svg><i class="ide">IDE</i><i class="a1">算法交易</i><i class="a2">新订单</i><i class="n1">1</i></div>
<div class="bk"></div>
<div class="gu"></div><div class="xx">×</div>
<div class="hd g"><b>交易品种</b><b>时间</b><b>类型</b><b>交易量</b><b>价位</b><b>止损</b><b>止盈</b><b>价位</b><b>盈利</b><u class="ar" style="left:113px"></u></div>
<div class="rows">
<div class="r g"><b>xauusd.c</b><b>2026.02.26 08:35:...</b><b>buy</b><b>0.01</b><b>5198.92</b><b></b><b>5192.99</b><b>5185.65</b><b>-13.27</b></div>
<div class="r g"><b>xauusd.c</b><b>2026.02.26 08:36:...</b><b>buy</b><b>0.01</b><b>5196.42</b><b></b><b>5192.99</b><b>5185.65</b><b>-10.77</b></div>
<div class="r g"><b>xauusd.c</b><b>2026.02.26 08:47:...</b><b>buy</b><b>0.01</b><b>5194.62</b><b></b><b>5192.99</b><b>5185.65</b><b>-8.97</b></div>
<div class="r g"><b>xauusd.c</b><b>2026.02.26 08:50:...</b><b>buy</b><b>0.01</b><b>5192.76</b><b></b><b>5192.99</b><b>5185.65</b><b>-7.11</b></div>
<div class="r g"><b>xauusd.c</b><b>2026.02.26 08:57:...</b><b>buy</b><b>0.02</b><b>5190.71</b><b></b><b>5192.99</b><b>5185.65</b><b>-10.12</b></div>
<div class="r g"><b>xauusd.c</b><b>2026.02.26 09:02:...</b><b>buy</b><b>0.02</b><b>5188.47</b><b></b><b>5192.99</b><b>5185.65</b><b>-5.64</b></div>
<div class="r g"><b>xauusd.c</b><b>2026.02.26 09:27:...</b><b>buy</b><b>0.02</b><b>5186.89</b><b></b><b>5192.99</b><b>5185.65</b><b>-2.48</b></div>
<div class="sum"><u></u><b class="m">结余: 16 721.67 USC&nbsp; 净值: 16 663.31&nbsp; 预付款: 25.96&nbsp; 可用预付款: 16 637.35&nbsp; 预付款维持率: 64 188.41 %</b><b class="e">-58.36</b><s>+</s></div></div>
<div class="cl g"><div></div><div></div><div></div><div></div><div></div><div></div><div></div><div></div><div></div></div>
<div class="tabs"><div class="act"></div><svg width="456" height="18"><use href="#ts"/></svg><div class="vt">工具箱</div><i>交易</i><i>敞口</i><i>历史</i><i>新闻</i><i>邮箱<em>12</em></i><i>经济日历</i><i>公司</i><i>预警</i><i>文章</i><i>代码库</i><i>专家</i><i>日志</i><i>市场</i><i>信号</i><i>VPS</i><i>测试器</i></div>
<div class="st"><svg width="456" height="18"><use href="#ss"/></svg><i>查看帮忙,请按 F1</i><i>Default</i></div>
</div>

<!-- W7 -->
<div class="w" style="left:491px;top:632.500px;width:449px;height:336.500px;--g:57px 67px 43px 45px 44px 44px 44px 44px 51px;--k:61.500px;--kh:3.500px;--h:68.500px;--rt:86.200px;--n:6;--tt:299.500px;--st:320.500px">
<svg class="ic" width="12" height="17"><use href="#ic"/></svg><div class="ti">6253501 - GTCGlobalSA-Server 2 - Hedge - GTC Global SA (Pty) Ltd - [XAUUSD.c,M5]</div><svg class="cap" width="80" height="22"><use href="#cp"/></svg>
<div class="mb"><i>文件(F)</i><i>查看(V)</i><i>插入(I)</i><i>图表(C)</i><i>工具(T)</i><i>窗口(W)</i><i>帮助(H)</i><svg class="mi" width="10" height="12"><use href="#mi"/></svg><svg class="mr" width="40" height="12"><use href="#mr"/></svg></div>
<div class="tb"><div class="btn"></div><div class="sel" style="left:257px"></div><svg width="364" height="24"><use href="#tb"/></svg><svg class="tr" width="88" height="24"><use href="#tr"/></svg><i class="ide">IDE</i><i class="a1">算法交易</i><i class="a2">新订单</i><i class="n1">1</i></div>
<div class="bk ck"></div>
<div class="gu"></div><div class="xx">×</div>
<div class="hd g s1"><b>交易品种</b><b>时间</b><b>类型</b><b>交易量</b><b>价位</b><b>止损</b><b>止盈</b><b>价位</b><b>盈利</b><u class="ar" style="left:39px"></u></div>
<div class="rows">
<div class="r g"><b>xauusd.c</b><b>2026.02.26 08:51:...</b><b>buy</b><b>0.01</b><b>5197.12</b><b></b><b>5192.48</b><b>5185.65</b><b>-11.47</b></div>
<div class="r g"><b>xauusd.c</b><b>2026.02.26 08:53:...</b><b>buy</b><b>0.01</b><b>5195.04</b><b></b><b>5192.48</b><b>5185.65</b><b>-9.39</b></div>
<div class="r g"><b>xauusd.c</b><b>2026.02.26 08:54:...</b><b>buy</b><b>0.01</b><b>5193.08</b><b></b><b>5192.48</b><b>5185.65</b><b>-7.43</b></div>
<div class="r g"><b>xauusd.c</b><b>2026.02.26 08:57:...</b><b>buy</b><b>0.01</b><b>5191.04</b><b></b><b>5192.48</b><b>5185.65</b><b>-5.39</b></div>
<div class="r g"><b>xauusd.c</b><b>2026.02.26 09:02:...</b><b>buy</b><b>0.02</b><b>5188.92</b><b></b><b>5192.48</b><b>5185.65</b><b>-6.54</b></div>
<div class="r g"><b>xauusd.c</b><b>2026.02.26 09:21:...</b><b>buy</b><b>0.02</b><b>5186.87</b><b></b><b>5192.48</b><b>5185.65</b><b>-2.44</b></div>
<div class="sum"><u></u><b class="m">结余: 16 208.09 USC&nbsp; 净值: 16 165.43&nbsp; 预付款: 20.76&nbsp; 可用预付款: 16 144.67&nbsp; 预付款维持率: 77 868.16 %</b><b class="e">-42.66</b><s>+</s></div></div>
<div class="cl g"><div></div><div></div><div></div><div></div><div></div><div></div><div></div><div></div><div></div></div>
<div class="tabs"><div class="act"></div><svg width="456" height="18"><use href="#ts"/></svg><div class="vt">工具箱</div><i>交易</i><i>敞口</i><i>历史</i><i>新闻</i><i>邮箱<em>11</em></i><i>经济日历</i><i>公司</i><i>预警</i><i>文章</i><i>代码库</i><i>专家</i><i>日志</i><i>市场</i><i>信号</i><i>VPS</i><i>测试器</i></div>
<div class="st"><svg width="456" height="18"><use href="#ss"/></svg><i>查看帮忙,请按 F1</i><i>Default</i></div>
</div>

<!-- W8 -->
<div class="w" style="left:1058px;top:640px;width:456px;height:303px;--g:57px 68px 44px 45px 46px 43px 45px 45px 53px;--k:60px;--kh:5px;--h:69px;--rt:87px;--n:6;--tt:266px;--st:288px">
<svg class="ic" width="12" height="17"><use href="#ic"/></svg><div class="ti">5958292 - GTCGlobalTrade-Server - Hedge - GTC Global Trade Capital Co. Limited - [XAUUSD.c,M5]</div><svg class="cap" width="80" height="22"><use href="#cp"/></svg>
<div class="mb"><i>文件(F)</i><i>查看(V)</i><i>插入(I)</i><i>图表(C)</i><i>工具(T)</i><i>窗口(W)</i><i>帮助(H)</i><svg class="mi" width="10" height="12"><use href="#mi"/></svg><svg class="mr" width="40" height="12"><use href="#mr"/></svg></div>
<div class="tb"><div class="btn"></div><div class="sel" style="left:275px"></div><svg width="364" height="24"><use href="#tb"/></svg><svg class="tr" width="88" height="24"><use href="#tr"/></svg><i class="ide">IDE</i><i class="a1">算法交易</i><i class="a2">新订单</i><i class="n1">1</i></div>
<div class="bk"></div>
<div class="gu"></div><div class="xx">×</div>
<div class="hd g"><b>交易品种</b><b>时间</b><b>类型</b><b>交易量</b><b>价位</b><b>止损</b><b>止盈</b><b>价位</b><b>盈利</b><u class="ar" style="left:113px"></u></div>
<div class="rows fu">
<div class="r g"><b>xauusd.c</b><b>2026.02.26 08:51:14</b><b>buy</b><b>0.01</b><b>5197.07</b><b></b><b>5192.31</b><b>5185.65</b><b>-11.42</b></div>
<div class="r g"><b>xauusd.c</b><b>2026.02.26 08:53:10</b><b>buy</b><b>0.01</b><b>5195.45</b><b></b><b>5192.31</b><b>5185.65</b><b>-9.80</b></div>
<div class="r g"><b>xauusd.c</b><b>2026.02.26 08:54:17</b><b>buy</b><b>0.01</b><b>5193.02</b><b></b><b>5192.31</b><b>5185.65</b><b>-7.37</b></div>
<div class="r g"><b>xauusd.c</b><b>2026.02.26 08:57:17</b><b>buy</b><b>0.01</b><b>5190.98</b><b></b><b>5192.31</b><b>5185.65</b><b>-5.33</b></div>
<div class="r g"><b>xauusd.c</b><b>2026.02.26 09:02:55</b><b>buy</b><b>0.02</b><b>5188.49</b><b></b><b>5192.31</b><b>5185.65</b><b>-5.68</b></div>
<div class="r g"><b>xauusd.c</b><b>2026.02.26 09:27:36</b><b>buy</b><b>0.02</b><b>5186.50</b><b></b><b>5192.31</b><b>5185.65</b><b>-1.70</b></div>
<div class="sum"><u></u><b class="m">结余: 17 148.84 USC&nbsp; 净值: 17 107.54&nbsp; 预付款: 20.76&nbsp; 可用预付款: 17 086.78&nbsp; 预付款维持率: 82 406.26 %</b><b class="e">-41.30</b><s>+</s></div></div>
<div class="cl g"><div></div><div></div><div></div><div></div><div></div><div></div><div></div><div></div><div></div></div>
<div class="tabs"><div class="act"></div><svg width="456" height="18"><use href="#ts"/></svg><div class="vt">工具箱</div><i>交易</i><i>敞口</i><i>历史</i><i>新闻</i><i>邮箱<em>129</em></i><i>经济日历</i><i>公司</i><i>预警</i><i>文章</i><i>代码库</i><i>专家</i><i>日志</i><i>市场</i><i>信号</i><i>VPS</i><i>测试器</i></div>
<div class="st"><svg width="456" height="18"><use href="#ss"/></svg><i>查看帮忙,请按 F1</i><i>Default</i></div>
</div>
</body></html>
